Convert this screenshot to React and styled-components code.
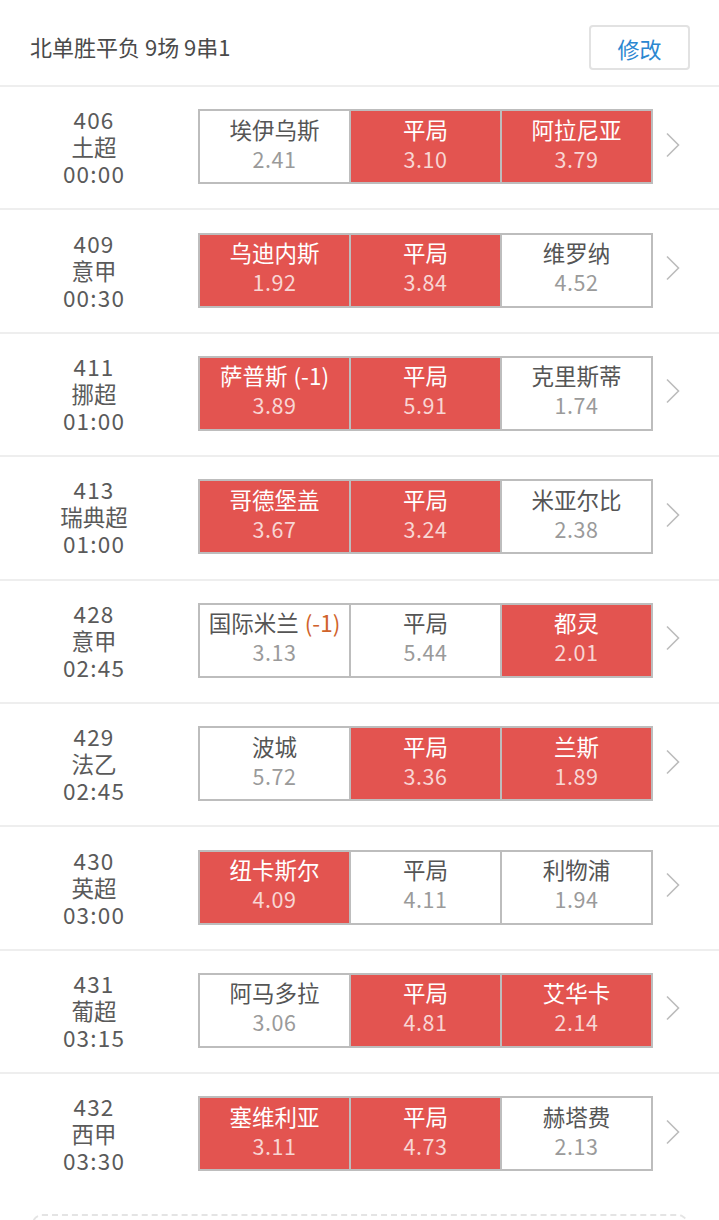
import React from 'react';
import styled, { createGlobalStyle } from 'styled-components';

const GlobalStyle = createGlobalStyle`
  html, body {
    margin: 0;
    padding: 0;
    background: #fff;
    font-family: "Noto Sans CJK SC", "Noto Sans", sans-serif;
  }
`;

const colors = {
  red: '#e35450',
  line: '#bdbdbd',
  sep: '#eeeeee',
  text: '#555',
  odds: '#9a9a9a',
  blue: '#2b87d1'
};

const matches = [
  { no: '406', league: '土超', time: '00:00', picks: [['埃伊乌斯', '2.41', false], ['平局', '3.10', true], ['阿拉尼亚', '3.79', true]] },
  { no: '409', league: '意甲', time: '00:30', picks: [['乌迪内斯', '1.92', true], ['平局', '3.84', true], ['维罗纳', '4.52', false]] },
  { no: '411', league: '挪超', time: '01:00', picks: [['萨普斯', '3.89', true, '(-1)'], ['平局', '5.91', true], ['克里斯蒂', '1.74', false]] },
  { no: '413', league: '瑞典超', time: '01:00', picks: [['哥德堡盖', '3.67', true], ['平局', '3.24', true], ['米亚尔比', '2.38', false]] },
  { no: '428', league: '意甲', time: '02:45', picks: [['国际米兰', '3.13', false, '(-1)'], ['平局', '5.44', false], ['都灵', '2.01', true]] },
  { no: '429', league: '法乙', time: '02:45', picks: [['波城', '5.72', false], ['平局', '3.36', true], ['兰斯', '1.89', true]] },
  { no: '430', league: '英超', time: '03:00', picks: [['纽卡斯尔', '4.09', true], ['平局', '4.11', false], ['利物浦', '1.94', false]] },
  { no: '431', league: '葡超', time: '03:15', picks: [['阿马多拉', '3.06', false], ['平局', '4.81', true], ['艾华卡', '2.14', true]] },
  { no: '432', league: '西甲', time: '03:30', picks: [['塞维利亚', '3.11', true], ['平局', '4.73', true], ['赫塔费', '2.13', false]] }
];

const Page = styled.div`
  width: 719px;
  height: 1220px;
  overflow: hidden;
  background: #fff;
`;

const Header = styled.div`
  height: 85px;
  display: flex;
  align-items: center;
  justify-content: space-between;
  padding: 0 29px 0 30px;
  border-bottom: 2px solid ${colors.sep};
`;

const Title = styled.div`
  font-size: 22px;
  color: #4a4a4a;
  margin-top: 6px;
`;

const EditButton = styled.button`
  width: 101px;
  height: 45px;
  margin-top: 10px;
  border: 2px solid #e2e2e2;
  border-radius: 4px;
  background: #fff;
  color: ${colors.blue};
  font-family: inherit;
  font-size: 22px;
  padding: 0;
`;

const Row = styled.div`
  height: 121.4px;
  display: flex;
  align-items: center;
  border-bottom: ${p => (p.last ? 'none' : `2px solid ${colors.sep}`)};
`;

const Info = styled.div`
  width: 188px;
  margin-right: 10px;
  display: flex;
  flex-direction: column;
  align-items: center;
  font-size: 22.5px;
  line-height: 27px;
  color: #5a5a5a;
  margin-top: -2px;
`;

const Digits = styled.div`
  letter-spacing: 1.2px;
`;

const Picks = styled.div`
  display: flex;
  width: 455px;
  height: 75px;
  margin-top: -2px;
  border: 2px solid ${colors.line};
  box-sizing: border-box;
`;

const Pick = styled.div`
  flex: 1;
  display: flex;
  flex-direction: column;
  align-items: center;
  justify-content: center;
  padding-bottom: 6px;
  background: ${p => (p.on ? colors.red : '#fff')};
  border-left: ${p => (p.first ? 'none' : `2px solid ${colors.line}`)};
  line-height: 30px;
`;

const Name = styled.div`
  font-size: 22.5px;
  color: ${p => (p.on ? '#fff' : colors.text)};
`;

const Handicap = styled.span`
  color: ${p => (p.on ? '#fff' : '#d0632c')};
  margin-left: 6px;
`;

const Odds = styled.div`
  font-size: 21.5px;
  letter-spacing: 0.5px;
  color: ${p => (p.on ? '#f8d6d4' : colors.odds)};
`;

const Arrow = styled.div`
  width: 40px;
  display: flex;
  justify-content: center;
  margin-top: -6px;
`;

const Dashed = styled.div`
  margin: 18px 31px 0 32px;
  height: 60px;
  border: 2px dashed #e4e4e4;
  border-radius: 10px;
`;

const Chevron = () => (
  <svg width="16" height="26" viewBox="0 0 16 26">
    <path d="M2 1.5 L13.5 13 L2 24.5" fill="none" stroke="#bcbcbc" strokeWidth="1.6" />
  </svg>
);

export default function App() {
  return (
    <Page>
      <GlobalStyle />
      <Header>
        <Title>北单胜平负 9场 9串1</Title>
        <EditButton>修改</EditButton>
      </Header>
      {matches.map((m, i) => (
        <Row key={m.no} last={i === matches.length - 1}>
          <Info>
            <Digits>{m.no}</Digits>
            <div>{m.league}</div>
            <Digits>{m.time}</Digits>
          </Info>
          <Picks>
            {m.picks.map(([name, odds, on, hc], j) => (
              <Pick key={j} on={on} first={j === 0}>
                <Name on={on}>
                  {name}
                  {hc && <Handicap on={on}>{hc}</Handicap>}
                </Name>
                <Odds on={on}>{odds}</Odds>
              </Pick>
            ))}
          </Picks>
          <Arrow>
            <Chevron />
          </Arrow>
        </Row>
      ))}
      <Dashed />
    </Page>
  );
}
